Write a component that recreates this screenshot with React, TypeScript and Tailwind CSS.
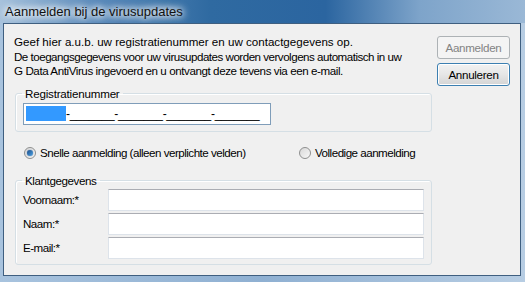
import React from "react";

function Radio({ checked }: { checked?: boolean }) {
  return (
    <span className="w-[12px] h-[12px] rounded-full border border-[#8e8f8f] bg-gradient-to-br from-[#d8d8d8] to-[#f8f8f8] flex items-center justify-center shrink-0">
      {checked && (
        <span className="w-[6px] h-[6px] rounded-full bg-gradient-to-br from-[#1c4d8a] to-[#4fa3e3] shadow-[0_0_1px_#0a3b7a]" />
      )}
    </span>
  );
}

function Field({ label }: { label: string }) {
  return (
    <div className="flex items-center h-[22px]">
      <span className="w-[92px] pl-[7px] tracking-[-0.5px]">{label}</span>
      <div className="w-[316px] h-[22px] bg-white border border-[#dde3ea] border-t-[#abadb3]" />
    </div>
  );
}

export default function App() {
  return (
    <div
      className="w-[525px] h-[282px] flex flex-col bg-gradient-to-r from-[#a8c3de] via-[#8fb0d2] to-[#b7cde3] text-[11.6px] text-black overflow-hidden"
      style={{ fontFamily: '"Liberation Sans", Arial, sans-serif' }}
    >
      {/* title bar */}
      <div className="h-[23px] shrink-0 flex items-center pl-[5px] bg-[linear-gradient(90deg,#a7c2dc_0%,#5b8bbb_18%,#2f6aa1_40%,#2b65a0_62%,#7ea4ca_80%,#9ab8d6_100%)]">
        <span className="text-[13px] text-[#111] [text-shadow:0_0_6px_#fff,0_0_8px_#fff,0_0_10px_#fff]">
          Aanmelden bij de virusupdates
        </span>
      </div>

      {/* client area */}
      <div className="ml-[3px] mr-[4px] mb-[6px] flex-1 bg-[#f0f0f0] border border-[#3f5f80] flex pl-[10px] pt-[11px]">
        <div className="w-[418px] flex flex-col">
          <div className="leading-[14.5px] whitespace-nowrap">
            <p>Geef hier a.u.b. uw registratienummer en uw contactgegevens op.</p>
            <p className="tracking-[-0.5px]">
              De toegangsgegevens voor uw virusupdates worden vervolgens automatisch in uw
            </p>
            <p className="tracking-[-0.42px]">
              G Data AntiVirus ingevoerd en u ontvangt deze tevens via een e-mail.
            </p>
          </div>

          <fieldset className="mt-[9px] ml-[1px] border border-[#d5dfe5] rounded-[3px] h-[44px] px-[7px] shadow-[inset_1px_1px_0_#fff]">
            <legend className="px-[3px] ml-[-1px] leading-[12px] tracking-[-0.2px]">Registratienummer</legend>
            <div className="mt-[3px] w-[248px] h-[22px] bg-white border border-[#7f9db9] flex items-center pl-[2px] leading-none">
              <span className="bg-[#3399ff] h-[15px] w-[40px] block" />
              <span className="tracking-[-0.3px] text-[12px]">-_______-_______-_______-_______</span>
            </div>
          </fieldset>

          <div className="mt-[14px] flex items-center h-[14px] tracking-[-0.5px]">
            <div className="flex items-center gap-[4px] pl-[10px] w-[285px]">
              <Radio checked />
              <span>Snelle aanmelding (alleen verplichte velden)</span>
            </div>
            <div className="flex items-center gap-[4px]">
              <Radio />
              <span>Volledige aanmelding</span>
            </div>
          </div>

          <fieldset className="mt-[15px] ml-[1px] border border-[#d5dfe5] rounded-[3px] h-[90px] shadow-[inset_1px_1px_0_#fff]">
            <legend className="px-[3px] ml-[6px] leading-[12px] tracking-[-0.4px]">Klantgegevens</legend>
            <div className="flex flex-col gap-[2px] mt-[2px]">
              <Field label="Voornaam:*" />
              <Field label="Naam:*" />
              <Field label="E-mail:*" />
            </div>
          </fieldset>
        </div>

        <div className="ml-[5px] flex flex-col gap-[4px] pt-[1px]">
          <button className="w-[73px] h-[23px] rounded-[3px] border border-[#adb2b5] bg-[#f4f4f4] text-[#838383] text-[11.6px] tracking-[-0.3px]">
            Aanmelden
          </button>
          <button className="w-[73px] h-[23px] rounded-[3px] border border-[#3c7fb1] bg-gradient-to-b from-[#f2f2f2] via-[#e6e6e6] to-[#d4d4d4] shadow-[inset_0_0_0_1px_#fff] text-[11.6px] tracking-[-0.3px]">
            Annuleren
          </button>
        </div>
      </div>
    </div>
  );
}
